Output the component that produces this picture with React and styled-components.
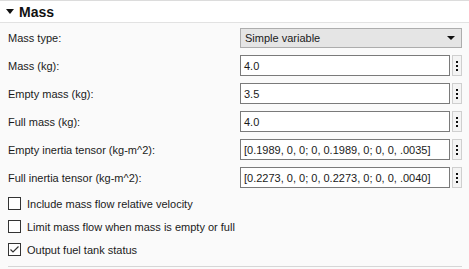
import React from 'react';
import styled, { createGlobalStyle } from 'styled-components';

const Global = createGlobalStyle`
  html, body {
    margin: 0;
    padding: 0;
    background: #fafafa;
  }
  body {
    font-family: Tahoma, "Liberation Sans", Arial, sans-serif;
    font-size: 11px;
    color: #1a1a1a;
  }
`;

const Panel = styled.div`
  width: 469px;
  height: 269px;
  box-sizing: border-box;
  background: #fafafa;
  border-top: 1px solid #dcdcdc;
  display: flex;
  flex-direction: column;
`;

const Header = styled.div`
  height: 21px;
  background: #ffffff;
  border-bottom: 1px solid #e2e2e2;
  display: flex;
  align-items: center;
  padding-left: 6px;
  gap: 5px;
  font-size: 14px;
  font-weight: bold;
  color: #111;
`;

const Caret = styled.span`
  width: 0;
  height: 0;
  border-left: 4.5px solid transparent;
  border-right: 4.5px solid transparent;
  border-top: 5px solid #111;
`;

const Body = styled.div`
  flex: 1;
  display: flex;
  flex-direction: column;
  padding: 5px 7px 0 8px;
`;

const Grid = styled.div`
  display: grid;
  grid-template-columns: 232px 1fr;
  row-gap: 7px;
  align-items: center;
`;

const Label = styled.div`
  font-size: 11px;
  white-space: nowrap;
`;

const Select = styled.div`
  height: 20px;
  box-sizing: border-box;
  background: #e5e5e5;
  border: 1px solid #adadad;
  display: flex;
  align-items: center;
  justify-content: space-between;
  padding: 0 6px 0 4px;
  font-size: 11px;
`;

const SelectArrow = styled.span`
  width: 0;
  height: 0;
  border-left: 4px solid transparent;
  border-right: 4px solid transparent;
  border-top: 4px solid #111;
`;

const Field = styled.div`
  display: flex;
  gap: 2px;
  height: 21px;
`;

const Input = styled.div`
  flex: 1;
  box-sizing: border-box;
  background: #fff;
  border: 1px solid #7a7a7a;
  display: flex;
  align-items: center;
  padding-left: 3px;
  font-size: 11px;
  white-space: nowrap;
`;

const MoreButton = styled.div`
  width: 10px;
  box-sizing: border-box;
  border: 1px solid #cfcfcf;
  background: #f4f4f4;
  display: flex;
  flex-direction: column;
  align-items: center;
  justify-content: center;
  gap: 2px;
`;

const Dot = styled.span`
  width: 2px;
  height: 2px;
  background: #111;
`;

const Checks = styled.div`
  display: flex;
  flex-direction: column;
  gap: 10px;
  margin-top: 9px;
`;

const CheckRow = styled.div`
  display: flex;
  align-items: center;
  gap: 6px;
  height: 13px;
`;

const Box = styled.span`
  width: 13px;
  height: 13px;
  box-sizing: border-box;
  border: 1px solid #333;
  background: #fff;
  display: flex;
  align-items: center;
  justify-content: center;
`;

const Footer = styled.div`
  margin-top: auto;
  margin-bottom: 2px;
  height: 1px;
  background: #d6d6d6;
`;

const fields = [
  ['Mass (kg):', '4.0'],
  ['Empty mass (kg):', '3.5'],
  ['Full mass (kg):', '4.0'],
  ['Empty inertia tensor (kg-m^2):', '[0.1989, 0, 0; 0, 0.1989, 0; 0, 0, .0035]'],
  ['Full inertia tensor (kg-m^2):', '[0.2273, 0, 0; 0, 0.2273, 0; 0, 0, .0040]'],
];

const checks = [
  ['Include mass flow relative velocity', false],
  ['Limit mass flow when mass is empty or full', false],
  ['Output fuel tank status', true],
];

export default function App() {
  return (
    <>
      <Global />
      <Panel>
        <Header>
          <Caret />
          Mass
        </Header>
        <Body>
          <Grid>
            <Label>Mass type:</Label>
            <Select>
              Simple variable
              <SelectArrow />
            </Select>
            {fields.map(([label, value]) => (
              <React.Fragment key={label}>
                <Label>{label}</Label>
                <Field>
                  <Input>{value}</Input>
                  <MoreButton>
                    <Dot />
                    <Dot />
                    <Dot />
                  </MoreButton>
                </Field>
              </React.Fragment>
            ))}
          </Grid>
          <Checks>
            {checks.map(([label, on]) => (
              <CheckRow key={label}>
                <Box>
                  {on && (
                    <svg width="11" height="11" viewBox="0 0 11 11">
                      <path d="M1.5 5.5 L4 8 L9.5 2.5" fill="none" stroke="#333" strokeWidth="1.2" />
                    </svg>
                  )}
                </Box>
                <Label>{label}</Label>
              </CheckRow>
            ))}
          </Checks>
          <Footer />
        </Body>
      </Panel>
    </>
  );
}
